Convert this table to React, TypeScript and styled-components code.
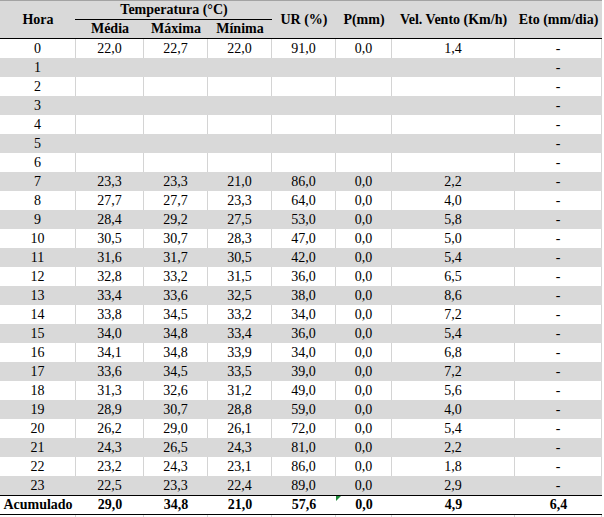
import React from "react";
import styled, { createGlobalStyle } from "styled-components";

const GlobalStyle = createGlobalStyle`
  html, body { margin: 0; padding: 0; background: #ffffff; }
  body { font-family: "Liberation Serif", "Times New Roman", serif; color: #000; }
`;

const COLS = "76px 68px 64px 64px 64px 56px 123px 87px";
const GRID = "#d4d4d4";
const SHADE = "#d9d9d9";

const Sheet = styled.div`
  width: 602px;
  font-family: "Liberation Serif", "Times New Roman", serif;
  font-size: 14px;
  color: #000;
`;

const Header = styled.div`
  display: grid;
  grid-template-columns: ${COLS};
  grid-template-rows: 18px 1px 18px;
  background: ${SHADE};
  border-top: 1px solid #a3a3a3;
  border-bottom: 1px solid #000;
  font-weight: bold;
`;

const HeadCell = styled.div<{ $col: string; $row: string }>`
  grid-column: ${(p) => p.$col};
  grid-row: ${(p) => p.$row};
  display: flex;
  align-items: center;
  justify-content: center;
  white-space: nowrap;
  line-height: 1;
`;

const Rule = styled.div`
  grid-column: 2 / 5;
  grid-row: 2 / 3;
  background: #000;
  margin-left: -1px;
`;

const Row = styled.div<{ $shade?: boolean }>`
  display: grid;
  grid-template-columns: ${COLS};
  height: 19px;
  background: ${(p) => (p.$shade ? SHADE : "#ffffff")};
`;

const Cell = styled.div<{ $shade?: boolean }>`
  display: flex;
  align-items: center;
  justify-content: center;
  line-height: 1;
  white-space: nowrap;
  border-right: 1px solid ${(p) => (p.$shade ? SHADE : GRID)};
`;

const TotalRow = styled.div`
  display: grid;
  grid-template-columns: ${COLS};
  height: 18px;
  border-top: 1px solid #000;
  border-bottom: 1px solid #000;
  background: #ffffff;
  font-weight: bold;
`;

const TotalCell = styled.div`
  position: relative;
  display: flex;
  align-items: center;
  justify-content: center;
  line-height: 1;
  white-space: nowrap;
`;

const ErrorMark = styled.span`
  position: absolute;
  top: 0;
  left: 0;
  width: 0;
  height: 0;
  border-top: 5px solid #1e8a3a;
  border-right: 5px solid transparent;
`;

const Tail = styled.div`
  display: grid;
  grid-template-columns: ${COLS};
  height: 3px;
`;

const TailCell = styled.div`
  border-right: 1px solid ${GRID};
`;

type Data = [string, string, string, string, string, string] | null;

const rows: Data[] = [
  ["22,0", "22,7", "22,0", "91,0", "0,0", "1,4"],
  null,
  null,
  null,
  null,
  null,
  null,
  ["23,3", "23,3", "21,0", "86,0", "0,0", "2,2"],
  ["27,7", "27,7", "23,3", "64,0", "0,0", "4,0"],
  ["28,4", "29,2", "27,5", "53,0", "0,0", "5,8"],
  ["30,5", "30,7", "28,3", "47,0", "0,0", "5,0"],
  ["31,6", "31,7", "30,5", "42,0", "0,0", "5,4"],
  ["32,8", "33,2", "31,5", "36,0", "0,0", "6,5"],
  ["33,4", "33,6", "32,5", "38,0", "0,0", "8,6"],
  ["33,8", "34,5", "33,2", "34,0", "0,0", "7,2"],
  ["34,0", "34,8", "33,4", "36,0", "0,0", "5,4"],
  ["34,1", "34,8", "33,9", "34,0", "0,0", "6,8"],
  ["33,6", "34,5", "33,5", "39,0", "0,0", "7,2"],
  ["31,3", "32,6", "31,2", "49,0", "0,0", "5,6"],
  ["28,9", "30,7", "28,8", "59,0", "0,0", "4,0"],
  ["26,2", "29,0", "26,1", "72,0", "0,0", "5,4"],
  ["24,3", "26,5", "24,3", "81,0", "0,0", "2,2"],
  ["23,2", "24,3", "23,1", "86,0", "0,0", "1,8"],
  ["22,5", "23,3", "22,4", "89,0", "0,0", "2,9"],
];

const totals = ["29,0", "34,8", "21,0", "57,6", "0,0", "4,9", "6,4"];

export default function App() {
  return (
    <>
      <GlobalStyle />
      <Sheet>
        <Header>
          <HeadCell $col="1 / 2" $row="1 / 4">Hora</HeadCell>
          <HeadCell $col="2 / 5" $row="1 / 2">Temperatura (°C)</HeadCell>
          <Rule />
          <HeadCell $col="2 / 3" $row="3 / 4">Média</HeadCell>
          <HeadCell $col="3 / 4" $row="3 / 4">Máxima</HeadCell>
          <HeadCell $col="4 / 5" $row="3 / 4">Mínima</HeadCell>
          <HeadCell $col="5 / 6" $row="1 / 4">UR (%)</HeadCell>
          <HeadCell $col="6 / 7" $row="1 / 4">P(mm)</HeadCell>
          <HeadCell $col="7 / 8" $row="1 / 4">Vel. Vento (Km/h)</HeadCell>
          <HeadCell $col="8 / 9" $row="1 / 4">Eto (mm/dia)</HeadCell>
        </Header>
        {rows.map((r, i) => {
          const shade = i % 2 === 1;
          const vals = r ?? ["", "", "", "", "", ""];
          return (
            <Row key={i} $shade={shade}>
              <Cell $shade={shade}>{i}</Cell>
              {vals.map((v, j) => (
                <Cell key={j} $shade={shade}>
                  {v}
                </Cell>
              ))}
              <Cell $shade={shade}>-</Cell>
            </Row>
          );
        })}
        <TotalRow>
          <TotalCell>Acumulado</TotalCell>
          {totals.map((v, j) => (
            <TotalCell key={j}>
              {j === 4 && <ErrorMark />}
              {v}
            </TotalCell>
          ))}
        </TotalRow>
        <Tail>
          {Array.from({ length: 8 }).map((_, k) => (
            <TailCell key={k} />
          ))}
        </Tail>
      </Sheet>
    </>
  );
}
